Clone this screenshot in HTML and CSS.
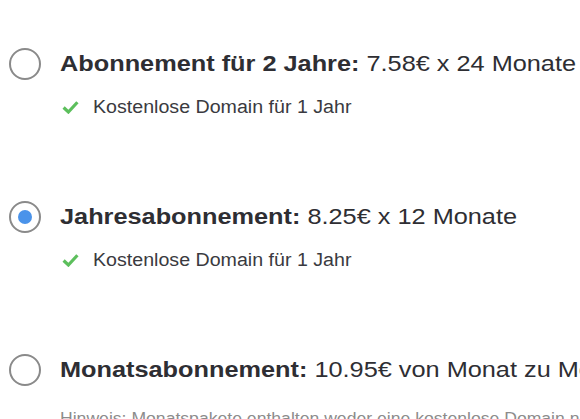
FILE: index.html
```html
<!DOCTYPE html>
<html lang="de">
<head>
  <meta charset="UTF-8" />
  <meta name="viewport" content="width=device-width, initial-scale=1" />
  <title>Abonnement</title>
  <link rel="stylesheet" href="styles.css">
</head>
<body>

  <div class="plans">
    <div class="plan">
      <span class="radio"></span>
      <div class="plan-body">
        <div class="plan-title"><b>Abonnement für 2 Jahre:</b> 7.58€ x 24 Monate</div>
        <div class="feature">
          <svg class="check" viewBox="0 0 16 13"><polyline points="1.5,7 6,11.2 14.5,2" /></svg>
          <span class="feature-text">Kostenlose Domain für 1 Jahr</span>
        </div>
      </div>
    </div>

    <div class="plan">
      <span class="radio checked"></span>
      <div class="plan-body">
        <div class="plan-title"><b>Jahresabonnement:</b> 8.25€ x 12 Monate</div>
        <div class="feature">
          <svg class="check" viewBox="0 0 16 13"><polyline points="1.5,7 6,11.2 14.5,2" /></svg>
          <span class="feature-text">Kostenlose Domain für 1 Jahr</span>
        </div>
      </div>
    </div>

    <div class="plan">
      <span class="radio"></span>
      <div class="plan-body">
        <div class="plan-title"><b>Monatsabonnement:</b> 10.95€ von Monat zu Monat</div>
        <div class="note">Hinweis: Monatspakete enthalten weder eine kostenlose Domain noch Gutscheine.</div>
      </div>
    </div>
  </div>

</body>
</html>
```

FILE: styles.css
```css
body {
  margin: 0;
  padding: 0;
  background: #fff;
  font-family: 'Liberation Sans', Arial, sans-serif;
  color: #2e2e33;
  overflow: hidden;
  height: 100vh;
}

.plans {
  padding: 48px 0 0 9px;
  overflow: hidden;
}

.plan {
  display: flex;
  gap: 19px;
  margin-bottom: 82px;
  white-space: nowrap;
}

.radio {
  flex: none;
  width: 28px;
  height: 28px;
  border: 2px solid #8a8a8a;
  border-radius: 50%;
  display: flex;
  align-items: center;
  justify-content: center;
}

.radio.checked::after {
  content: "";
  width: 14px;
  height: 14px;
  border-radius: 50%;
  background: #4a93ea;
}

/* the type in this design runs a little wider than Arial */
.plan-title {
  font-size: 22px;
  line-height: 32px;
  transform: scaleX(1.15);
  transform-origin: 0 50%;
}

.feature {
  display: flex;
  align-items: center;
  margin-top: 15px;
  font-size: 18px;
  line-height: 24px;
  color: #3a3a40;
}

.feature-text {
  display: inline-block;
  transform: scaleX(1.09);
  transform-origin: 0 50%;
}

.check {
  width: 17px;
  height: 14px;
  margin: 0 14px 0 2px;
  fill: none;
  stroke: #5cbf5c;
  stroke-width: 3;
}

.note {
  margin-top: 22px;
  font-size: 16px;
  line-height: 22px;
  color: #8c8c8c;
  transform: scaleX(1.1);
  transform-origin: 0 50%;
}
```
